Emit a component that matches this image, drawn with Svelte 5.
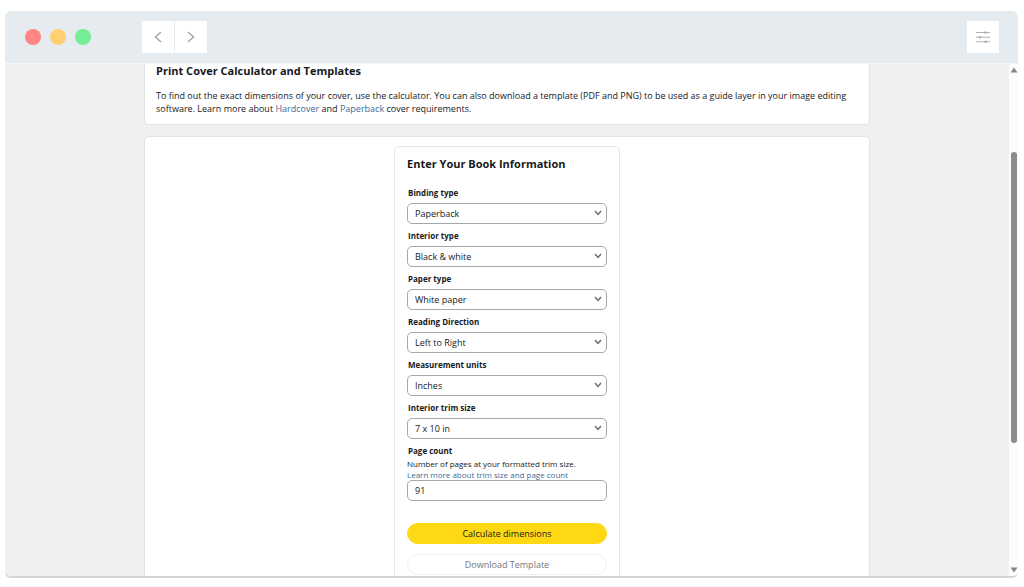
<script lang="ts">

    // FORM STATE
    let fields = $state([
        { id: 'binding', label: 'Binding type', value: 'Paperback', options: ['Paperback', 'Hardcover'] },
        { id: 'interior', label: 'Interior type', value: 'Black & white', options: ['Black & white', 'Premium color', 'Standard color'] },
        { id: 'paper', label: 'Paper type', value: 'White paper', options: ['White paper', 'Cream paper'] },
        { id: 'direction', label: 'Reading Direction', value: 'Left to Right', options: ['Left to Right', 'Right to Left'] },
        { id: 'units', label: 'Measurement units', value: 'Inches', options: ['Inches', 'Millimeters'] },
        { id: 'trim', label: 'Interior trim size', value: '7 x 10 in', options: ['6 x 9 in', '7 x 10 in', '8 x 10 in'] }
    ]);

    let pageCount = $state('91');
    let calculated = $state(false);

    function calculate(event: SubmitEvent) {
        event.preventDefault();
        calculated = Number(pageCount) > 0;
    }

</script>

<div class="window">

    <header class="toolbar">
        <div class="lights">
            <span class="light red"></span>
            <span class="light yellow"></span>
            <span class="light green"></span>
        </div>

        <nav class="history">
            <button class="tool" aria-label="Back">
                <svg width="10" height="14" viewBox="0 0 10 14"><path d="M8 2 2.5 7 8 12" /></svg>
            </button>
            <button class="tool" aria-label="Forward">
                <svg width="10" height="14" viewBox="0 0 10 14"><path d="M2 2 7.5 7 2 12" /></svg>
            </button>
        </nav>

        <button class="tool settings" aria-label="Settings">
            <svg class="sliders" width="16" height="14" viewBox="0 0 16 14">
                <path d="M1 2.5h14M1 7.2h14M1 11.7h14" />
                <circle cx="10.5" cy="2.5" r="1.3" />
                <circle cx="5" cy="7.2" r="1.3" />
                <circle cx="10.5" cy="11.7" r="1.3" />
            </svg>
        </button>
    </header>

    <div class="viewport">

        <main class="page">

            <section class="panel intro">
                <h1>Print Cover Calculator and Templates</h1>
                <p>
                    To find out the exact dimensions of your cover, use the calculator. You can also download a template (PDF and PNG) to be used as a guide layer in your image editing software. Learn more about <a href="#hardcover">Hardcover</a> and <a href="#paperback">Paperback</a> cover requirements.
                </p>
            </section>

            <section class="panel calculator">
                <form class="card" onsubmit={calculate}>
                    <h2>Enter Your Book Information</h2>

                    {#each fields as field (field.id)}
                        <div class="field">
                            <label for={field.id}>{field.label}</label>
                            <div class="select">
                                <select id={field.id} bind:value={field.value}>
                                    {#each field.options as option}
                                        <option value={option}>{option}</option>
                                    {/each}
                                </select>
                                <svg width="8" height="6" viewBox="0 0 8 6"><path d="M1 1l3 3.4L7 1" /></svg>
                            </div>
                        </div>
                    {/each}

                    <div class="field pages">
                        <label for="pages">Page count</label>
                        <span class="hint">Number of pages at your formatted trim size.</span>
                        <a class="hint" href="#trim-help">Learn more about trim size and page count</a>
                        <input id="pages" type="text" inputmode="numeric" bind:value={pageCount} />
                    </div>

                    <button class="action primary" type="submit">Calculate dimensions</button>
                    <button class="action" type="button" disabled={!calculated}>Download Template</button>
                </form>
            </section>

        </main>

        <div class="scrollbar">
            <svg width="8" height="6" viewBox="0 0 8 6"><path d="M4 0.5 7.5 5.5h-7z" /></svg>
            <div class="track">
                <div class="thumb"></div>
            </div>
            <svg width="8" height="6" viewBox="0 0 8 6"><path d="M4 5.5 7.5 0.5h-7z" /></svg>
        </div>

    </div>

</div>

<style>

    :global(body) {
        background: #fff;
    }

    :global(#app) {
        display: flow-root;
    }

    .window {
        display: flex;
        flex-direction: column;
        box-sizing: border-box;
        height: calc(100vh - 20px);
        margin: 11px 6px 9px 5px;
        border-bottom: 2px solid #d3d6d6;
        border-radius: 6px;
        overflow: hidden;
        background: #eef1f0;
        color: #16191c;
        font-family: "Open Sans", "Noto Sans", sans-serif;
        font-size: 9px;
    }

    * {
        box-sizing: border-box;
    }

    /* TOOLBAR */
    .toolbar {
        display: flex;
        flex: none;
        align-items: center;
        height: 53px;
        padding: 0 19px 0 20px;
        border-bottom: 1px dotted #fff;
        background: #e6ebef;
    }

    .lights {
        display: flex;
        gap: 9px;
    }

    .light {
        width: 16px;
        height: 16px;
        border-radius: 50%;
    }

    .red {
        background: #ff8585;
    }

    .yellow {
        background: #ffd071;
    }

    .green {
        background: #74ed94;
    }

    .history {
        display: flex;
        gap: 1px;
        margin-left: 51px;
    }

    .tool {
        display: flex;
        align-items: center;
        justify-content: center;
        width: 32px;
        height: 32px;
        padding: 0;
        border: none;
        background: #fff;
        cursor: pointer;
    }

    .tool path {
        fill: none;
        stroke: #aaa8a6;
        stroke-width: 1.5;
    }

    .tool .sliders path {
        stroke: #b5b1ae;
        stroke-width: 1;
    }

    .sliders circle {
        fill: #b5b1ae;
    }

    .settings {
        margin-left: auto;
    }

    /* PAGE */
    .viewport {
        display: flex;
        flex: 1;
        min-height: 0;
    }

    .page {
        flex: 1;
        overflow: hidden;
    }

    .panel {
        max-width: 726px;
        margin: 0 auto;
        border: 1px solid #e0e4e4;
        border-radius: 5px;
        background: #fff;
    }

    .intro {
        padding: 0 11px 9px;
        border-top: none;
        border-radius: 0 0 5px 5px;
    }

    h1,
    h2 {
        margin: 0;
        font-size: 11px;
        font-weight: 700;
        line-height: 13px;
    }

    p {
        margin: 12px 0 0;
        line-height: 13px;
    }

    a {
        color: #426c96;
        text-decoration: none;
    }

    .calculator {
        margin-top: 11px;
        padding-top: 9px;
    }

    .card {
        width: 226px;
        margin: 0 auto;
        padding: 10px 12px;
        border: 1px solid #e4e6e6;
        border-radius: 5px;
    }

    h2 {
        margin-bottom: 17px;
    }

    .field {
        display: flex;
        flex-direction: column;
        margin-bottom: 6px;
    }

    label {
        padding-left: 1px;
        margin-bottom: 4px;
        font-size: 8px;
        font-weight: 700;
        line-height: 12px;
    }

    .select {
        position: relative;
    }

    .select svg {
        position: absolute;
        top: 7px;
        right: 5px;
        pointer-events: none;
    }

    .select path {
        fill: none;
        stroke: #6a6e70;
        stroke-width: 1.5;
    }

    select,
    input {
        display: block;
        width: 100%;
        height: 21px;
        padding: 0 7px 1px;
        border: 1px solid #a4a8a8;
        border-radius: 5px;
        background: #fff;
        color: inherit;
        font: inherit;
        appearance: none;
    }

    .pages {
        margin-bottom: 22px;
    }

    .pages label {
        margin-bottom: 1px;
    }

    .hint {
        font-size: 8px;
        line-height: 11px;
    }

    .action {
        display: block;
        width: 100%;
        height: 21px;
        margin-bottom: 10px;
        padding: 0;
        border: 1px solid #eff0f0;
        border-radius: 11px;
        background: #fff;
        color: inherit;
        font: inherit;
        cursor: pointer;
    }

    .action:disabled {
        color: #75797b;
        cursor: default;
    }

    .primary {
        border-color: #ffd814;
        background: #ffd814;
    }

    /* SCROLLBAR */
    .scrollbar {
        display: flex;
        flex: none;
        flex-direction: column;
        align-items: center;
        width: 9px;
        padding: 3px 0;
        background: #fbfcfc;
    }

    .scrollbar path {
        fill: #858686;
    }

    .track {
        display: flex;
        flex: 1;
        flex-direction: column;
        width: 6px;
        padding: 79px 0 124px;
    }

    .thumb {
        flex: 1;
        border-radius: 3px;
        background: #8a8c8c;
    }

</style>
